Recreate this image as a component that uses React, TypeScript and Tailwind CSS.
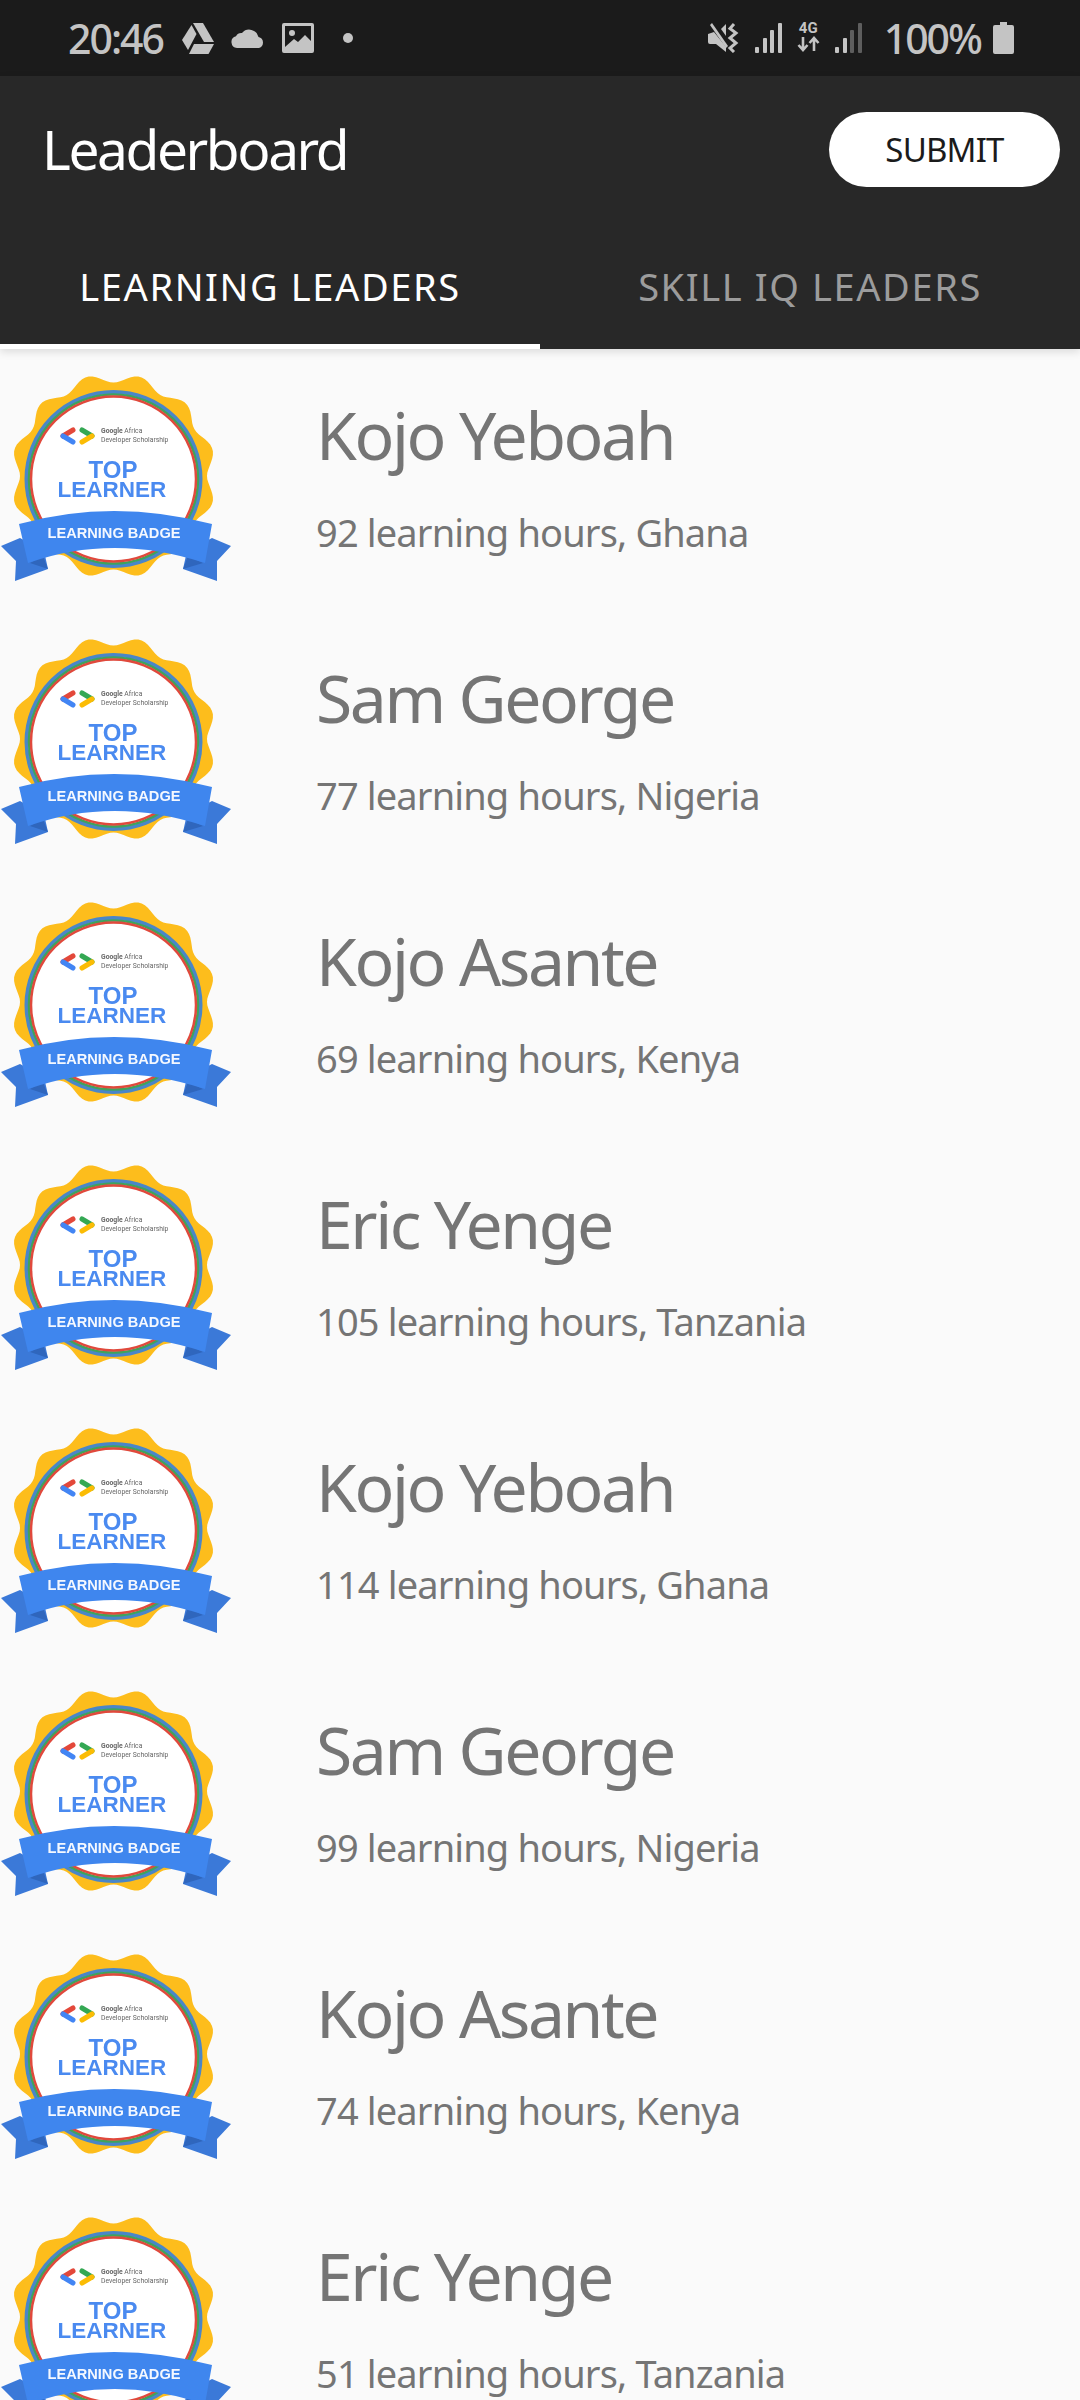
const leaders = [
  ["Kojo Yeboah", "92 learning hours, Ghana"],
  ["Sam George", "77 learning hours, Nigeria"],
  ["Kojo Asante", "69 learning hours, Kenya"],
  ["Eric Yenge", "105 learning hours, Tanzania"],
  ["Kojo Yeboah", "114 learning hours, Ghana"],
  ["Sam George", "99 learning hours, Nigeria"],
  ["Kojo Asante", "74 learning hours, Kenya"],
  ["Eric Yenge", "51 learning hours, Tanzania"],
];

function scallop(cx: number, cy: number, r: number, amp: number, n: number) {
  const pts: string[] = [];
  for (let i = 0; i < 360; i += 2) {
    const t = (i * Math.PI) / 180;
    const rr = r - amp * Math.cos(n * t);
    pts.push(`${(cx + rr * Math.sin(t)).toFixed(1)},${(cy - rr * Math.cos(t)).toFixed(1)}`);
  }
  return "M" + pts.join("L") + "Z";
}
const scallopPath = scallop(113.5, 115, 98, 4.5, 12);

function Badge() {
  return (
    <svg viewBox="0 0 240 240" className="w-[240px] h-[240px] shrink-0 mt-[12px] blur-[0.5px]">
      <path d={scallopPath} fill="#fdbd1c" />
      <circle cx="113.5" cy="118" r="87" fill="#fff" stroke="#4a86c8" strokeWidth="4" />
      <circle cx="113.5" cy="118" r="84.5" fill="none" stroke="#3fa45b" strokeWidth="2.5" />
      <circle cx="113.5" cy="118" r="82.5" fill="none" stroke="#e0493c" strokeWidth="2.5" />
      <g fill="none" strokeWidth="5" strokeLinecap="round">
        <path d="M73 69L63 75" stroke="#e3483a" />
        <path d="M63 75L73 81" stroke="#4285f4" />
        <path d="M82 69L92 75" stroke="#34a853" />
        <path d="M92 75L82 81" stroke="#fbbc04" />
      </g>
      <text x="101" y="72" fontSize="6.8" fontWeight="700" fill="#666" fontFamily="Roboto, sans-serif">Google <tspan fontWeight="400">Africa</tspan></text>
      <text x="101" y="81" fontSize="6.8" fill="#666" fontFamily="Roboto, sans-serif">Developer Scholarship</text>
      <text x="113" y="117" fontSize="24" fontWeight="700" fill="#4a8af0" textAnchor="middle" fontFamily="Liberation Sans, sans-serif">TOP</text>
      <text x="112" y="136" fontSize="22.5" fontWeight="700" fill="#4a8af0" textAnchor="middle" fontFamily="Liberation Sans, sans-serif">LEARNER</text>
      <path d="M20 177L1 185L16 200L15 220L48 208L44 190Z" fill="#3b79d8" />
      <path d="M212 177L231 185L217 200L217 220L183 208L187 190Z" fill="#3b79d8" />
      <path d="M30 202L48 208L43 195Z" fill="#2f66bd" />
      <path d="M203 202L183 208L188 195Z" fill="#2f66bd" />
      <path d="M19 163Q113 137 212 163L205 202Q113 172 28 202Z" fill="#3f86ee" />
      <text x="114" y="177" fontSize="14.6" fontWeight="700" fill="#f4f8ff" textAnchor="middle" fontFamily="Liberation Sans, sans-serif">LEARNING BADGE</text>
    </svg>
  );
}

function Signal({ dim }: { dim?: boolean }) {
  return (
    <svg width="27" height="30" viewBox="0 0 27 30" fill="#c4c4c4">
      <rect x="0" y="24" width="4" height="6" rx="1" />
      <rect x="8" y="15" width="4" height="15" rx="1" />
      <rect x="15" y="7" width="4" height="23" rx="1" opacity={dim ? 0.4 : 1} />
      <rect x="23" y="0" width="4" height="30" rx="1" opacity={dim ? 0.4 : 1} />
    </svg>
  );
}

export default function App() {
  return (
    <div className="w-[1080px] h-[2400px] overflow-hidden bg-[#fafafa] font-['Noto_Sans',sans-serif]">
      <div className="h-[76px] bg-[#1b1b1b] flex items-center justify-between pl-[68px] pr-[66px] text-[#c4c4c4]">
        <div className="flex items-center">
          <span className="text-[41px] leading-none tracking-[-2px] font-medium">20:46</span>
          <svg width="32" height="31" viewBox="0 0 32 31" fill="#c4c4c4" className="ml-[19px]">
            <path d="M11 0H21L32 19H22Z" />
            <path d="M9.5 2L14.5 11L6 27L0 17Z" />
            <path d="M12 21H32L26.5 31H7Z" />
          </svg>
          <svg width="34" height="20" viewBox="0 0 34 20" fill="#c4c4c4" className="ml-[17px]">
            <path d="M6 20A6 6 0 0 1 5 8.2 A6 6 0 0 1 11 5 A9.5 9.5 0 0 1 27.5 9 A5.7 5.7 0 0 1 28 20Z" />
          </svg>
          <svg width="32" height="30" viewBox="0 0 32 30" className="ml-[17px]">
            <path fillRule="evenodd" fill="#c4c4c4" d="M2 0H30A2 2 0 0 1 32 2V28A2 2 0 0 1 30 30H2A2 2 0 0 1 0 28V2A2 2 0 0 1 2 0ZM3 3V27H29V3Z" />
            <circle cx="10" cy="10" r="3" fill="#c4c4c4" />
            <path d="M3 24L12 16L16 19L23 12L29 18V27H3Z" fill="#c4c4c4" />
          </svg>
          <div className="ml-[29px] w-[10px] h-[10px] rounded-full bg-[#c4c4c4]" />
        </div>
        <div className="flex items-center">
          <svg width="31" height="30" viewBox="0 0 31 30" fill="#c4c4c4">
            <path d="M0 11L6 9L18 24V29L8 21H2A2 2 0 0 1 0 19Z" />
            <path d="M2 2L4 0L20 23L18 25Z" />
            <path d="M13 6L18 1V13Z" />
            <path d="M26 1L22 5.5L28 10L22 15L28 20L22 25L26 29" fill="none" stroke="#c4c4c4" strokeWidth="3" />
          </svg>
          <div className="ml-[16px]"><Signal /></div>
          <div className="ml-[15px] flex flex-col items-center w-[23px] h-[34px]">
            <span className="text-[15px] leading-[15px] font-bold font-['Roboto',sans-serif]">4G</span>
            <svg width="23" height="16" viewBox="0 0 23 16" fill="none" stroke="#c4c4c4" strokeWidth="2.6">
              <path d="M6 1V13M1.5 9L6 14L10.5 9" />
              <path d="M17 15V3M12.5 7L17 2L21.5 7" />
            </svg>
          </div>
          <div className="ml-[15px]"><Signal dim /></div>
          <span className="ml-[22px] text-[41px] leading-none tracking-[-2px] font-medium">100%</span>
          <svg width="21" height="32" viewBox="0 0 21 32" fill="#c4c4c4" className="ml-[12px]">
            <path d="M7 0H14V3H19A2 2 0 0 1 21 5V30A2 2 0 0 1 19 32H2A2 2 0 0 1 0 30V5A2 2 0 0 1 2 3H7Z" />
          </svg>
        </div>
      </div>

      <div className="relative z-10 bg-[#282828] h-[273px] shadow-[0_3px_8px_rgba(0,0,0,0.12)] flex flex-col">
        <div className="h-[122px] flex items-start justify-between pl-[42px] pr-[20px]">
          <h1 className="mt-[41px] text-[55px] leading-[64px] text-white tracking-[-2.4px]">Leaderboard</h1>
          <button className="mt-[36px] w-[231px] h-[75px] rounded-full bg-white text-[#1b1b1b] text-[33px] tracking-[-0.8px] leading-none">SUBMIT</button>
        </div>
        <div className="flex flex-1 text-[38px] leading-none tracking-[1.6px]">
          <div className="relative w-[540px] flex items-center justify-center text-white pt-[24px]">
            LEARNING LEADERS
            <div className="absolute left-0 right-0 bottom-0 h-[5px] bg-white" />
          </div>
          <div className="w-[540px] flex items-center justify-center text-[#9c9c9c] pt-[24px]">SKILL IQ LEADERS</div>
        </div>
      </div>

      <div>
        {leaders.map(([name, detail], i) => (
          <div key={i} className="flex h-[263px]">
            <Badge />
            <div className="pl-[76px] pt-[45px] text-[#757575]">
              <div className="text-[66px] leading-[80px] tracking-[-2.4px]">{name}</div>
              <div className="mt-[33px] text-[38px] leading-[50px] tracking-[-0.85px]">{detail}</div>
            </div>
          </div>
        ))}
      </div>
    </div>
  );
}
